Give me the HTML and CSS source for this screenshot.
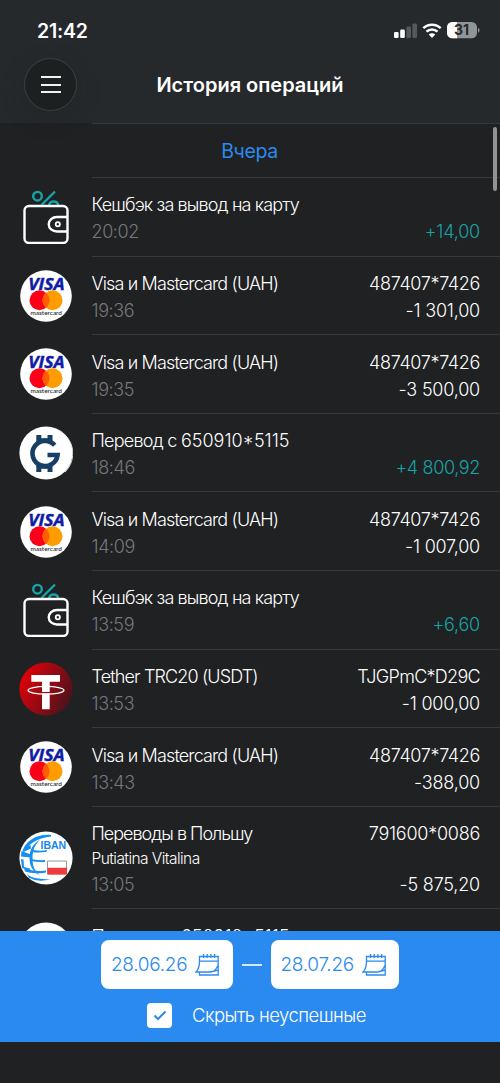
FILE: index.html
```html
<!DOCTYPE html>
<html lang="ru">
<head>
<meta charset="utf-8">
<title>История операций</title>
<link rel="stylesheet" href="styles.css">
</head>
<body>
<svg class="defs" width="0" height="0">
  <linearGradient id="red" x1="0" y1="0.25" x2="1" y2="0.75"><stop offset="0" stop-color="#e60008"/><stop offset="1" stop-color="#45131d"/></linearGradient>
  <symbol id="wallet" viewBox="0 0 54 54">
    <g fill="none" stroke="#15a5a8" stroke-width="2.400"><circle cx="18.500" cy="6.200" r="4.300"/><path d="M22.500 15 36 1.500M30 15.500a4.700 4.700 0 0 1 9.300 0"/></g>
    <g fill="none" stroke="#fff" stroke-width="2.400"><rect x="5.500" y="16" width="43" height="37" rx="4.500"/><path d="M48.500 27H38a8 7 0 0 0 0 14.500h10.500"/><circle cx="38.800" cy="34.200" r="2.100" stroke-width="1.800"/></g>
  </symbol>
  <symbol id="visa" viewBox="0 0 54 54">
    <circle cx="27" cy="27" r="25.800" fill="#fff"/>
    <text x="9.200" y="20.500" textLength="36.500" lengthAdjust="spacingAndGlyphs" font-family="Open Sans" font-weight="700" font-style="italic" font-size="15.800" fill="#101ca5" stroke="#101ca5" stroke-width=".4">VISA</text>
    <circle cx="20.500" cy="31.300" r="10" fill="#fb0019"/><circle cx="33.500" cy="31.300" r="10" fill="#ff9d00"/>
    <path d="M27 23.700a10 10 0 0 1 0 15.200a10 10 0 0 1 0-15.200" fill="#ff5d00"/>
    <text x="11.500" y="46" textLength="31.500" lengthAdjust="spacingAndGlyphs" font-family="Lato" font-weight="500" font-size="5.500" fill="#222">mastercard</text>
  </symbol>
  <symbol id="gcoin" viewBox="0 0 54 54">
    <circle cx="27" cy="27" r="26.600" fill="#fff"/><path d="M39 4a26 26 0 0 1 7 42" fill="none" stroke="#ddd" stroke-width="1"/>
    <path d="M35.700 19.300A12.600 12.600 0 1 0 38.600 29H28.500" fill="none" stroke="#173f66" stroke-width="4.600"/>
    <path d="M17.300 9h5v3.200h6.200V9h5v7h-4c-2.500-1-5-1-7 0l-5.200 2zM17.300 46h5v-3.200h6.200V46h5v-7h-4c-2.500 1-5 1-7 0l-5.200-2z" fill="#173f66"/>
  </symbol>
  <symbol id="tether" viewBox="0 0 54 54">
    <circle cx="27" cy="27" r="26.600" fill="url(#red)"/>
    <ellipse cx="27" cy="28.300" rx="18" ry="3.900" fill="none" stroke="#fff" stroke-width="1.300"/>
    <path d="M12.300 13H41v6.700H30.700v10.200H23V19.700H12.300zM23 31.200h7.700V47.200H23z" fill="#fff"/>
  </symbol>
  <symbol id="iban" viewBox="0 0 54 54">
    <circle cx="27" cy="27" r="26.600" fill="#fff"/>
    <g fill="#168df0">
      <path d="M32 4C19 2.500 7 9 3.500 20l2.500.5C10 12 19 7 32 5.500z"/>
      <path d="M21.500 8.500C15 14 13.500 20 13.500 28S16 40 21 44.500C13 40 10.500 34 10.500 27S13 13 21.500 8.500z"/>
      <path d="M5 17 11.500 14 12 17.500 4 21zM2.500 20l9.500 3.500v3L2 25.500zM2 28l2.500.5.500 7.500 6 1.500.5 2.300L3 37z"/>
      <path d="M14 19q8 1.600 14 0l-.5 1.800q-7 1.400-13.500.4zM13 28.300q7 1.300 13 .8v1.800q-7 .6-13-.6zM5 37.200q9 4 22 2.200v2Q14 43.500 6 40.500zM8 43.500q8 5.500 23.500 4.500Q20 52 10 46.800z"/>
    </g>
    <text x="21.500" y="17.900" textLength="25.700" lengthAdjust="spacingAndGlyphs" font-family="Liberation Sans" font-weight="700" font-size="11.500" fill="#1686e8">IBAN</text>
    <path d="M28.500 30h19v13h-19z" fill="#fff" stroke="#999" stroke-width="1"/><path d="M28.500 36.800H48v6.700H28.500z" fill="#f13a3d"/>
  </symbol>
  <symbol id="calendar" viewBox="0 0 24 22">
    <g fill="none" stroke="#2b8aef" stroke-width="1.300"><path d="M4.500 2.500v4.700h18.700V2.500zM4.500 7.200C4.500 12 3 16 1 18h14.500c3 0 6-3 7.700-7V2.500M4.500 18v3h18.700V11M15.500 18l7.700-2"/><path d="M8.500 0v4M12.200 0v4M15.900 0v4M19.600 0v4"/></g>
  </symbol>
</svg>

<div class="screen">
  <header class="header">
    <div class="status">
      <span class="clock">21:42</span>
      <svg class="indicators" width="86" height="18" viewBox="0 0 86 18">
        <g fill="#fff"><rect x="0" y="10" width="4.600" height="6" rx="1.200"/><rect x="6.200" y="7.500" width="4.600" height="8.500" rx="1.200"/></g>
        <g fill="#55595b"><rect x="12.400" y="4.500" width="4.600" height="11.500" rx="1.200"/><rect x="18.400" y="1.500" width="4.600" height="14.500" rx="1.200"/></g>
        <g fill="none" stroke="#fff" stroke-width="2.500"><path d="M29.300 6.200a12.500 12.500 0 0 1 17.400 0M32.500 9.700a8 8 0 0 1 11 0"/></g><path d="M34.700 12.600a5 5 0 0 1 6.600 0L38 16z" fill="#fff"/>
        <clipPath id="level"><path d="M53 0h10v18H53z"/></clipPath>
        <rect x="53" y="0" width="30" height="16.300" rx="5.300" fill="#929596"/><rect x="53" y="0" width="30" height="16.300" rx="5.300" fill="#fff" clip-path="url(#level)"/><path d="M84 5.700q1.500.8 1.500 2.500T84 10.700z" fill="#929596"/>
        <text x="67.500" y="13.300" text-anchor="middle" font-family="Inter" font-size="14" font-weight="700" fill="#25292b">31</text>
      </svg>
    </div>
    <div class="titlebar">
      <button class="menu"><span></span><span></span><span></span></button>
      <h1>История операций</h1>
    </div>
  </header>

  <main class="list">
    <i class="scrollbar"></i>
    <h2 class="day">Вчера</h2>
    <article class="row"><svg class="icon"><use href="#wallet"/></svg><div class="body"><div class="left"><p class="name">Кешбэк за вывод на карту</p><p class="time">20:02</p></div><div class="right"><p></p><p class="sum plus">+14,00</p></div></div></article>
    <article class="row"><svg class="icon"><use href="#visa"/></svg><div class="body"><div class="left"><p class="name">Visa и Mastercard (UAH)</p><p class="time">19:36</p></div><div class="right"><p>487407*7426</p><p class="sum">-1 301,00</p></div></div></article>
    <article class="row"><svg class="icon"><use href="#visa"/></svg><div class="body"><div class="left"><p class="name">Visa и Mastercard (UAH)</p><p class="time">19:35</p></div><div class="right"><p>487407*7426</p><p class="sum">-3 500,00</p></div></div></article>
    <article class="row"><svg class="icon"><use href="#gcoin"/></svg><div class="body"><div class="left"><p class="transfer">Перевод с <span>650910*5115</span></p><p class="time">18:46</p></div><div class="right"><p></p><p class="plus">+4 800,92</p></div></div></article>
    <article class="row"><svg class="icon"><use href="#visa"/></svg><div class="body"><div class="left"><p class="name">Visa и Mastercard (UAH)</p><p class="time">14:09</p></div><div class="right"><p>487407*7426</p><p class="sum">-1 007,00</p></div></div></article>
    <article class="row"><svg class="icon"><use href="#wallet"/></svg><div class="body"><div class="left"><p class="name">Кешбэк за вывод на карту</p><p class="time">13:59</p></div><div class="right"><p></p><p class="sum plus">+6,60</p></div></div></article>
    <article class="row"><svg class="icon"><use href="#tether"/></svg><div class="body"><div class="left"><p class="name">Tether TRC20 (USDT)</p><p class="time">13:53</p></div><div class="right"><p class="wallet-id">TJGPmC*D29C</p><p class="sum">-1 000,00</p></div></div></article>
    <article class="row"><svg class="icon"><use href="#visa"/></svg><div class="body"><div class="left"><p class="name">Visa и Mastercard (UAH)</p><p class="time">13:43</p></div><div class="right"><p>487407*7426</p><p class="sum">-388,00</p></div></div></article>
    <article class="row tall"><svg class="icon"><use href="#iban"/></svg><div class="body"><div class="left"><p class="name poland">Переводы в Польшу</p><p class="sub">Putiatina Vitalina</p><p class="time">13:05</p></div><div class="right"><p class="iban-id">791600*0086</p><p class="sum">-5 875,20</p></div></div></article>
    <article class="row"><svg class="icon"><use href="#gcoin"/></svg><div class="body"><div class="left"><p class="transfer">Перевод с <span>650910*5115</span></p></div></div></article>
  </main>

  <footer class="filter">
    <div class="dates">
      <button class="date from"><span>28.06.26</span><svg class="cal"><use href="#calendar"/></svg></button>
      <i class="dash"></i>
      <button class="date to"><span>28.07.26</span><svg class="cal"><use href="#calendar"/></svg></button>
    </div>
    <label class="hide"><span class="check"><svg width="14" height="11" viewBox="0 0 14 11"><path d="M1.500 5.500 5 9l7.500-7.500" fill="none" stroke="#2b8aef" stroke-width="2"/></svg></span><span class="label">Скрыть неуспешные</span></label>
  </footer>
</div>
</body>
</html>
```
FILE: styles.css
```css
* { box-sizing: border-box; margin: 0; padding: 0; }
body { background: #202123; font-family: Inter, "Noto Sans", sans-serif; color: #fff; }
button { border: 0; font: inherit; }
.defs { position: absolute; }
.screen { width: 500px; height: 1083px; display: flex; flex-direction: column; overflow: hidden; }
.header { height: 123px; flex: none; background: #25292b; }
.status { height: 58px; padding: 3px 20px 0 37px; display: flex; justify-content: space-between; align-items: center; }
.clock { font-size: 19.5px; font-weight: 600; letter-spacing: -0.2px; }
.indicators { display: block; margin-top: 1px; }
.titlebar { height: 53px; padding-left: 24px; display: grid; grid-template-columns: 53px 1fr; align-items: center; }
.menu { width: 53px; height: 53px; border-radius: 50%; background: #1d2021; border: 1px solid #394145; box-shadow: 0 7px 24px rgba(25, 27, 28, .22); display: flex; flex-direction: column; align-items: center; justify-content: center; gap: 5.3px; }
.menu span { width: 20px; height: 2px; background: #f1f2f2; }
h1 { padding: 0 77px 0 0; text-align: center; font-size: 20px; line-height: 28px; font-weight: 600; letter-spacing: 0; }
.list { flex: 1; min-height: 0; overflow: hidden; position: relative; }
.scrollbar { position: absolute; right: 3px; top: 4px; width: 4px; height: 64px; border-radius: 2px; background: #929394; }
.day { margin-left: 92px; height: 55px; border: solid #38393b; border-width: 1px 0; padding-right: 93px; text-align: center; font-size: 19.5px; line-height: 54px; font-weight: 400; letter-spacing: -0.4px; color: #2b8aef; }
.row { height: 78.6px; display: flex; align-items: center; }
.tall { height: 102.6px; }
.icon { width: 54px; height: 54px; flex: none; margin: 0 19px; }
.body { flex: 1; height: 100%; display: flex; justify-content: space-between; padding: 13.4px 20px 0 0; border-bottom: 1px solid #38393b; font-size: 18px; line-height: 27px; font-weight: 350; white-space: nowrap; letter-spacing: -0.35px; }
.body p { min-height: 27px; }
.left { margin-left: -0.5px; }
.name { letter-spacing: -0.86px; }
.poland { letter-spacing: -1px; }
.transfer { letter-spacing: -0.75px; }
.transfer span { letter-spacing: 0; }
.body .sub { font-size: 15.5px; line-height: 24px; min-height: 24px; letter-spacing: -0.55px; }
.time { color: #77787a; letter-spacing: -0.4px; }
.right { text-align: right; }
.sum { letter-spacing: -0.2px; }
.wallet-id { letter-spacing: -0.7px; }
.iban-id { letter-spacing: -0.25px; }
.tall .right { display: flex; flex-direction: column; gap: 24px; }
.plus { color: #15a5a8; }
.filter { height: 111px; flex: none; background: #2b8aef; padding-top: 9px; margin-bottom: 41px; }
.dates { height: 49px; margin-left: 101px; display: flex; align-items: center; }
.date { height: 49px; border-radius: 8px; background: #fff; color: #2b8aef; display: flex; align-items: center; padding-left: 10px; gap: 7px; font-size: 19px; font-weight: 350; letter-spacing: -0.3px; }
.from { width: 131.5px; }
.to { width: 128px; }
.date span { width: 77px; text-align: left; white-space: nowrap; }
.to span { width: 74px; }
.cal { width: 24px; height: 22px; }
.dash { width: 20px; height: 2px; background: #d5e8fc; margin: 0 9px; }
.hide { display: flex; align-items: center; margin: 14px 0 0 147px; gap: 20px; }
.check { width: 25px; height: 25px; border-radius: 4px; background: #fff; display: grid; place-items: center; }
.label { font-size: 18.5px; font-weight: 350; line-height: 25px; letter-spacing: -0.55px; white-space: nowrap; }
```
